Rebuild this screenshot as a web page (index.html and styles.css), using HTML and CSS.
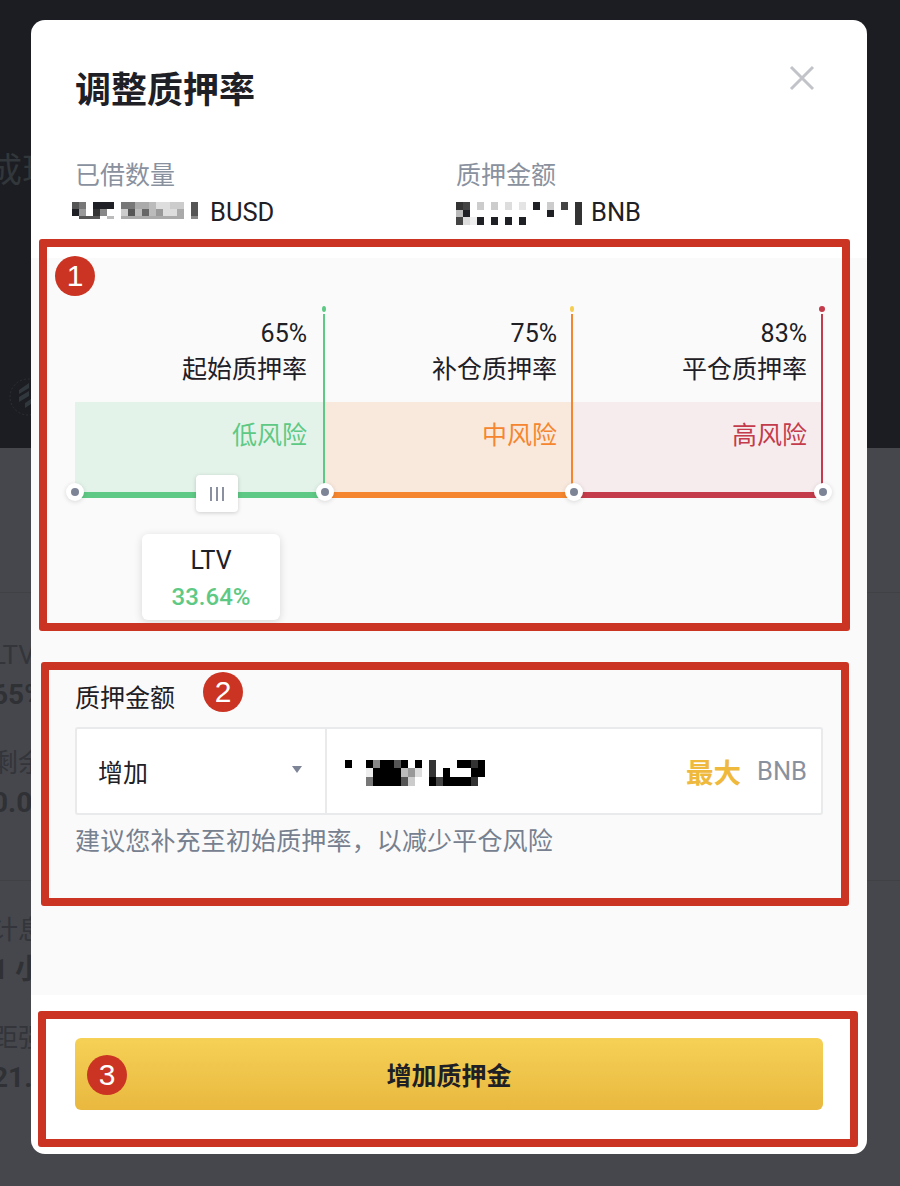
FILE: index.html
```html
<!DOCTYPE html>
<html lang="zh-CN">
<head>
    <meta charset="UTF-8">
    <meta name="viewport" content="width=device-width, initial-scale=1.0">
    <title>调整质押率</title>
    <link rel="stylesheet" href="styles.css">
</head>
<body>

<!-- Dimmed page behind the dialog -->
<div class="backdrop">
    <div class="backdrop-top">
        <div class="ghost-title">成现</div>
        <svg class="ghost-logo" width="32" height="40" viewBox="0 0 32 40">
            <circle cx="28" cy="20" r="18" fill="none" stroke="#2c2f35" stroke-width="1" stroke-dasharray="2 2"/>
            <path d="M19 20l10-6v5l-10 6zM25 26l6-4v5l-6 4zM19 13l10-7v5l-10 6z" fill="#30383d"/>
        </svg>
    </div>
    <div class="backdrop-bottom">
        <div class="ghost-row ghost-first">
            <div class="ghost-label">LTV</div>
            <div class="ghost-value">65%</div>
            <div class="ghost-label ghost-gap">剩余</div>
            <div class="ghost-value">0.0</div>
        </div>
        <div class="ghost-row ghost-second">
            <div class="ghost-label">计息</div>
            <div class="ghost-value">1 小</div>
            <div class="ghost-label ghost-gap">距强</div>
            <div class="ghost-value">21.</div>
        </div>
    </div>
</div>

<div class="modal">
    <div class="modal-header">
        <h3 class="modal-title">调整质押率</h3>
        <svg class="close-icon" width="26" height="26" viewBox="0 0 26 26">
            <path d="M2 2l22 22M24 2L2 24" stroke="#c1c3c9" stroke-width="3" fill="none"/>
        </svg>
    </div>

    <div class="info-row">
        <div class="info-col">
            <div class="info-label">已借数量</div>
            <div class="info-value">
                <svg class="mask" width="127" height="20" viewBox="0 0 127 20">
                    <rect x="0" y="0" width="7" height="7" fill="#555"/><rect x="7" y="0" width="7" height="7" fill="#777"/>
                    <rect x="0" y="7" width="7" height="7" fill="#1e2026"/><rect x="7" y="7" width="7" height="7" fill="#999"/>
                    <rect x="7" y="14" width="21" height="3" fill="#555"/>
                    <rect x="21" y="0" width="21" height="7" fill="#1e2026"/><rect x="21" y="7" width="7" height="7" fill="#333"/>
                    <rect x="28" y="7" width="7" height="7" fill="#888"/><rect x="35" y="14" width="7" height="3" fill="#bbb"/>
                    <rect x="49" y="0" width="14" height="7" fill="#777"/><rect x="63" y="0" width="14" height="7" fill="#aaa"/>
                    <rect x="77" y="0" width="7" height="7" fill="#bbb"/><rect x="84" y="0" width="14" height="7" fill="#ddd"/>
                    <rect x="98" y="0" width="14" height="7" fill="#ccc"/><rect x="119" y="0" width="7" height="14" fill="#555"/>
                    <rect x="49" y="7" width="7" height="7" fill="#ccc"/><rect x="56" y="7" width="7" height="7" fill="#555"/>
                    <rect x="63" y="7" width="7" height="7" fill="#bbb"/><rect x="70" y="7" width="7" height="7" fill="#666"/>
                    <rect x="77" y="7" width="7" height="7" fill="#bbb"/><rect x="84" y="7" width="7" height="7" fill="#999"/>
                    <rect x="91" y="7" width="14" height="7" fill="#ddd"/><rect x="105" y="7" width="7" height="7" fill="#aaa"/>
                    <rect x="49" y="14" width="63" height="3" fill="#aaa"/><rect x="119" y="14" width="7" height="3" fill="#888"/>
                </svg>
                <span>BUSD</span>
            </div>
        </div>
        <div class="info-col">
            <div class="info-label">质押金额</div>
            <div class="info-value">
                <svg class="mask" width="127" height="23" viewBox="0 0 127 23">
                    <rect x="0" y="0" width="7" height="8" fill="#333"/><rect x="7" y="0" width="7" height="8" fill="#444"/>
                    <rect x="21" y="0" width="7" height="8" fill="#ccc"/><rect x="35" y="0" width="7" height="8" fill="#ccc"/>
                    <rect x="49" y="0" width="7" height="8" fill="#ddd"/><rect x="63" y="0" width="7" height="8" fill="#e4e4e4"/>
                    <rect x="77" y="0" width="7" height="8" fill="#1e2026"/><rect x="91" y="0" width="7" height="8" fill="#ccc"/>
                    <rect x="105" y="0" width="7" height="8" fill="#444"/><rect x="119" y="0" width="7" height="23" fill="#333"/>
                    <rect x="0" y="8" width="7" height="7" fill="#bbb"/><rect x="7" y="8" width="7" height="7" fill="#1e2026"/>
                    <rect x="91" y="8" width="7" height="7" fill="#1e2026"/>
                    <rect x="0" y="15" width="7" height="8" fill="#444"/><rect x="7" y="15" width="7" height="8" fill="#ddd"/>
                    <rect x="14" y="15" width="7" height="8" fill="#eee"/><rect x="21" y="15" width="7" height="8" fill="#1e2026"/>
                    <rect x="35" y="15" width="7" height="8" fill="#1e2026"/><rect x="49" y="15" width="7" height="8" fill="#1e2026"/>
                    <rect x="63" y="15" width="7" height="8" fill="#1e2026"/>
                </svg>
                <span>BNB</span>
            </div>
        </div>
    </div>

    <div class="modal-body">
        <div class="risk-chart">
            <div class="zones">
                <div class="zone zone-low">
                    <div class="zone-head">
                        <div>65%</div>
                        <div>起始质押率</div>
                    </div>
                    <div class="zone-band">低风险</div>
                </div>
                <div class="zone zone-mid">
                    <div class="zone-head">
                        <div>75%</div>
                        <div>补仓质押率</div>
                    </div>
                    <div class="zone-band">中风险</div>
                </div>
                <div class="zone zone-high">
                    <div class="zone-head">
                        <div>83%</div>
                        <div>平仓质押率</div>
                    </div>
                    <div class="zone-band">高风险</div>
                </div>
            </div>
            <div class="track">
                <div class="track-seg track-low"></div>
                <div class="track-seg track-mid"></div>
                <div class="track-seg track-high"></div>
                <span class="knob knob-1"></span>
                <span class="knob knob-2"></span>
                <span class="knob knob-3"></span>
                <span class="knob knob-4"></span>
                <div class="handle"><i></i><i></i><i></i></div>
                <div class="ltv-tip">
                    <div class="ltv-name">LTV</div>
                    <div class="ltv-value">33.64%</div>
                </div>
            </div>
        </div>

        <div class="form-group">
            <label class="form-label">质押金额</label>
            <div class="input-box">
                <div class="input-select">
                    <span>增加</span>
                    <span class="caret"></span>
                </div>
                <div class="input-amount">
                    <svg class="mask" width="140" height="26" viewBox="0 0 140 26">
                        <rect x="0" y="0" width="7" height="8" fill="#000"/>
                        <rect x="21" y="0" width="7" height="8" fill="#000"/><rect x="28" y="0" width="7" height="8" fill="#888"/>
                        <rect x="35" y="0" width="14" height="8" fill="#000"/><rect x="49" y="0" width="7" height="8" fill="#555"/>
                        <rect x="56" y="0" width="7" height="8" fill="#000"/><rect x="70" y="0" width="7" height="8" fill="#000"/>
                        <rect x="84" y="0" width="7" height="8" fill="#333"/><rect x="112" y="0" width="14" height="8" fill="#000"/>
                        <rect x="126" y="0" width="7" height="8" fill="#333"/><rect x="133" y="0" width="7" height="8" fill="#000"/>
                        <rect x="21" y="8" width="7" height="9" fill="#eee"/><rect x="28" y="8" width="28" height="9" fill="#000"/>
                        <rect x="56" y="8" width="7" height="9" fill="#bbb"/><rect x="63" y="8" width="7" height="9" fill="#999"/>
                        <rect x="70" y="8" width="7" height="9" fill="#ddd"/><rect x="84" y="8" width="7" height="9" fill="#333"/>
                        <rect x="98" y="8" width="7" height="9" fill="#000"/><rect x="126" y="8" width="14" height="9" fill="#000"/>
                        <rect x="21" y="17" width="7" height="9" fill="#777"/><rect x="28" y="17" width="28" height="9" fill="#000"/>
                        <rect x="56" y="17" width="7" height="9" fill="#555"/><rect x="63" y="17" width="7" height="9" fill="#ccc"/>
                        <rect x="84" y="17" width="7" height="9" fill="#000"/><rect x="91" y="17" width="7" height="9" fill="#444"/>
                        <rect x="98" y="17" width="28" height="9" fill="#000"/><rect x="126" y="17" width="7" height="9" fill="#333"/>
                    </svg>
                    <span class="max-link">最大</span>
                    <span class="unit">BNB</span>
                </div>
            </div>
            <div class="form-hint">建议您补充至初始质押率，以减少平仓风险</div>
        </div>
    </div>

    <div class="modal-footer">
        <button type="button" class="submit-btn">增加质押金</button>
    </div>
</div>

<!-- Red annotations drawn on top of the screenshot -->
<div class="note-box note-box-1"></div>
<div class="note-box note-box-2"></div>
<div class="note-box note-box-3"></div>
<div class="note-num note-num-1">1</div>
<div class="note-num note-num-2">2</div>
<div class="note-num note-num-3">3</div>

</body>
</html>
```

FILE: styles.css
```css
* {
    box-sizing: border-box;
}

html,
body {
    height: 100%;
}

body {
    margin: 0;
    position: relative;
    overflow: hidden;
    background-color: #46474c;
    color: #1e2026;
    font-family: Roboto, "Noto Sans CJK SC", sans-serif;
}

/* Page behind the dialog */
.backdrop {
    height: 1186px;
}

.backdrop-top {
    height: 448px;
    padding-top: 148px;
    background-color: #1c1d22;
}

.ghost-title {
    margin-left: -12px;
    font-size: 34px;
    line-height: 44px;
    color: #31373a;
}

.ghost-logo {
    display: block;
    margin-top: 185px;
}

.backdrop-bottom {
    height: 738px;
    padding-top: 144px;
    color: #2f3135;
}

.ghost-row {
    margin-left: -8px;
}

.ghost-first {
    height: 288px;
    padding-top: 44px;
    border-top: 1px solid #404145;
}

.ghost-second {
    padding-top: 31px;
    border-top: 1px solid #404145;
}

.ghost-label {
    height: 36px;
    font-size: 26px;
    line-height: 36px;
    color: #33353a;
    white-space: nowrap;
}

.ghost-value {
    height: 44px;
    font-size: 28px;
    font-weight: 700;
    line-height: 44px;
    white-space: nowrap;
}

.ghost-gap {
    margin-top: 28px;
}

/* Dialog */
.modal {
    position: absolute;
    left: 31px;
    top: 20px;
    width: 836px;
    height: 1134px;
    background-color: #fff;
    border-radius: 14px;
    overflow: hidden;
}

.modal-header {
    display: flex;
    justify-content: space-between;
    padding: 47px 52px 0 44px;
    height: 138px;
}

.modal-title {
    margin: 0;
    font-size: 36px;
    font-weight: 700;
    line-height: 48px;
}

.close-icon {
    margin-top: -2px;
}

.info-row {
    display: flex;
    padding-left: 44px;
    height: 100px;
}

.info-col {
    width: 381px;
}

.info-label {
    height: 34px;
    font-size: 25px;
    line-height: 36px;
    color: #8a919e;
}

.info-value {
    display: flex;
    align-items: flex-start;
    height: 40px;
    font-size: 25.5px;
    line-height: 40px;
}

.info-col:first-child .info-value {
    margin-left: -3px;
}

.info-value .mask {
    margin-top: 10px;
    margin-right: 11px;
}

.info-col:last-child .info-value .mask {
    margin-right: 8px;
}

.modal-body {
    height: 737px;
    padding: 56px 44px 0;
    background-color: #fafafa;
}

/* Risk zones */
.zones {
    display: grid;
    grid-template-columns: 250px 248px 250px;
}

.zone {
    position: relative;
    height: 178px;
    border-right: 2px solid;
    text-align: right;
}

.zone::before {
    content: "";
    position: absolute;
    top: -8px;
    right: -4px;
    width: 6px;
    height: 6px;
    border-radius: 50%;
}

.zone-head {
    height: 88px;
    padding: 2px 16px 0 0;
    font-size: 25px;
    line-height: 36px;
}

.zone-band {
    height: 90px;
    padding-right: 16px;
    font-size: 25px;
    line-height: 68px;
}

.zone-mid .zone-head,
.zone-mid .zone-band,
.zone-high .zone-head,
.zone-high .zone-band {
    padding-right: 14px;
}

.zone-low {
    border-color: #5ec984;
}

.zone-low::before {
    width: 4px;
    right: -3px;
    background-color: #5ec984;
}

.zone-low .zone-band {
    background-color: #e3f3ea;
    color: #5ec984;
}

.zone-mid {
    border-color: #f5862f;
}

.zone-mid::before {
    width: 4px;
    right: -3px;
    background-color: #f6cd4f;
}

.zone-mid .zone-band {
    background-color: #f9e9dd;
    color: #f5862f;
}

.zone-high {
    border-color: #c43b4b;
}

.zone-high::before {
    background-color: #c43b4b;
}

.zone-high .zone-band {
    background-color: #f6ecee;
    color: #c43b4b;
}

/* Slider track */
.track {
    position: relative;
    display: grid;
    grid-template-columns: 250px 249px 249px;
    height: 6px;
}

.track-low {
    background-color: #5ec984;
}

.track-mid {
    background-color: #f5862f;
}

.track-high {
    background-color: #c43b4b;
}

.knob {
    position: absolute;
    top: -9px;
    width: 18px;
    height: 18px;
    margin-left: -9px;
    background-color: #fff;
    border-radius: 50%;
    box-shadow: 0 1px 5px rgba(0, 0, 0, 0.14);
}

.knob::after {
    content: "";
    position: absolute;
    left: 5px;
    top: 5px;
    width: 8px;
    height: 8px;
    background-color: #7d8496;
    border-radius: 50%;
}

.knob-1 {
    left: 0;
}

.knob-2 {
    left: 250px;
}

.knob-3 {
    left: 499px;
}

.knob-4 {
    left: 748px;
}

.handle {
    position: absolute;
    left: 121px;
    top: -17px;
    display: flex;
    justify-content: center;
    align-items: center;
    gap: 4px;
    width: 42px;
    height: 37px;
    background-color: #fff;
    border-radius: 4px;
    box-shadow: 0 1px 4px rgba(0, 0, 0, 0.18);
}

.handle i {
    display: block;
    width: 2px;
    height: 14px;
    background-color: #8a90a0;
}

.ltv-tip {
    position: absolute;
    left: 67px;
    top: 42px;
    width: 138px;
    height: 86px;
    padding-top: 9px;
    background-color: #fff;
    border-radius: 6px;
    box-shadow: 0 2px 8px rgba(0, 0, 0, 0.14);
    text-align: center;
}

.ltv-name {
    font-size: 25px;
    line-height: 36px;
}

.ltv-value {
    font-size: 24px;
    font-weight: 500;
    line-height: 36px;
    color: #5ec984;
}

/* Amount form */
.form-group {
    margin-top: 181px;
}

.form-label {
    display: block;
    height: 40px;
    font-size: 25px;
    line-height: 40px;
}

.input-box {
    display: flex;
    width: 748px;
    height: 88px;
    margin-top: 8px;
    background-color: #fff;
    border: 2px solid #e9eaec;
    border-radius: 3px;
}

.input-select {
    display: flex;
    justify-content: space-between;
    align-items: center;
    width: 250px;
    padding: 0 23px 0 21px;
    border-right: 2px solid #e9eaec;
    font-size: 25px;
}

.caret {
    width: 0;
    height: 0;
    border-left: 5px solid transparent;
    border-right: 5px solid transparent;
    border-top: 7px solid #7d8496;
    margin-bottom: 4px;
}

.input-amount {
    flex: 1;
    display: flex;
    align-items: center;
    padding: 0 14px 0 18px;
}

.input-amount .mask {
    margin-right: auto;
    margin-top: 3px;
}

.max-link {
    font-size: 27.5px;
    font-weight: 700;
    color: #eeb93c;
}

.unit {
    margin-left: 16px;
    font-size: 25.5px;
    color: #8a919e;
}

.form-hint {
    margin-top: 9px;
    font-size: 25px;
    letter-spacing: 0.15px;
    line-height: 36px;
    color: #76808f;
}

/* Footer button */
.modal-footer {
    padding: 43px 44px 0;
}

.submit-btn {
    display: block;
    width: 748px;
    height: 72px;
    padding: 0;
    border: none;
    border-radius: 6px;
    background: linear-gradient(180deg, #f5d155 0%, #e9b83f 100%);
    color: #1e2026;
    font-family: inherit;
    font-size: 25px;
    font-weight: 700;
}

/* Annotations */
.note-box {
    position: absolute;
    border: 8px solid #cb3423;
    border-radius: 3px;
}

.note-box-1 {
    left: 39px;
    top: 239px;
    width: 811px;
    height: 392px;
}

.note-box-2 {
    left: 41px;
    top: 662px;
    width: 808px;
    height: 244px;
}

.note-box-3 {
    left: 38px;
    top: 1011px;
    width: 820px;
    height: 136px;
}

.note-num {
    position: absolute;
    width: 40px;
    height: 40px;
    margin: -20px 0 0 -20px;
    background-color: #cb3423;
    border-radius: 50%;
    color: #fff;
    font-family: "Liberation Sans", sans-serif;
    font-size: 30px;
    line-height: 40px;
    text-align: center;
}

.note-num-1 {
    left: 75px;
    top: 276px;
}

.note-num-2 {
    left: 223px;
    top: 692px;
}

.note-num-3 {
    left: 107px;
    top: 1075px;
}
```
